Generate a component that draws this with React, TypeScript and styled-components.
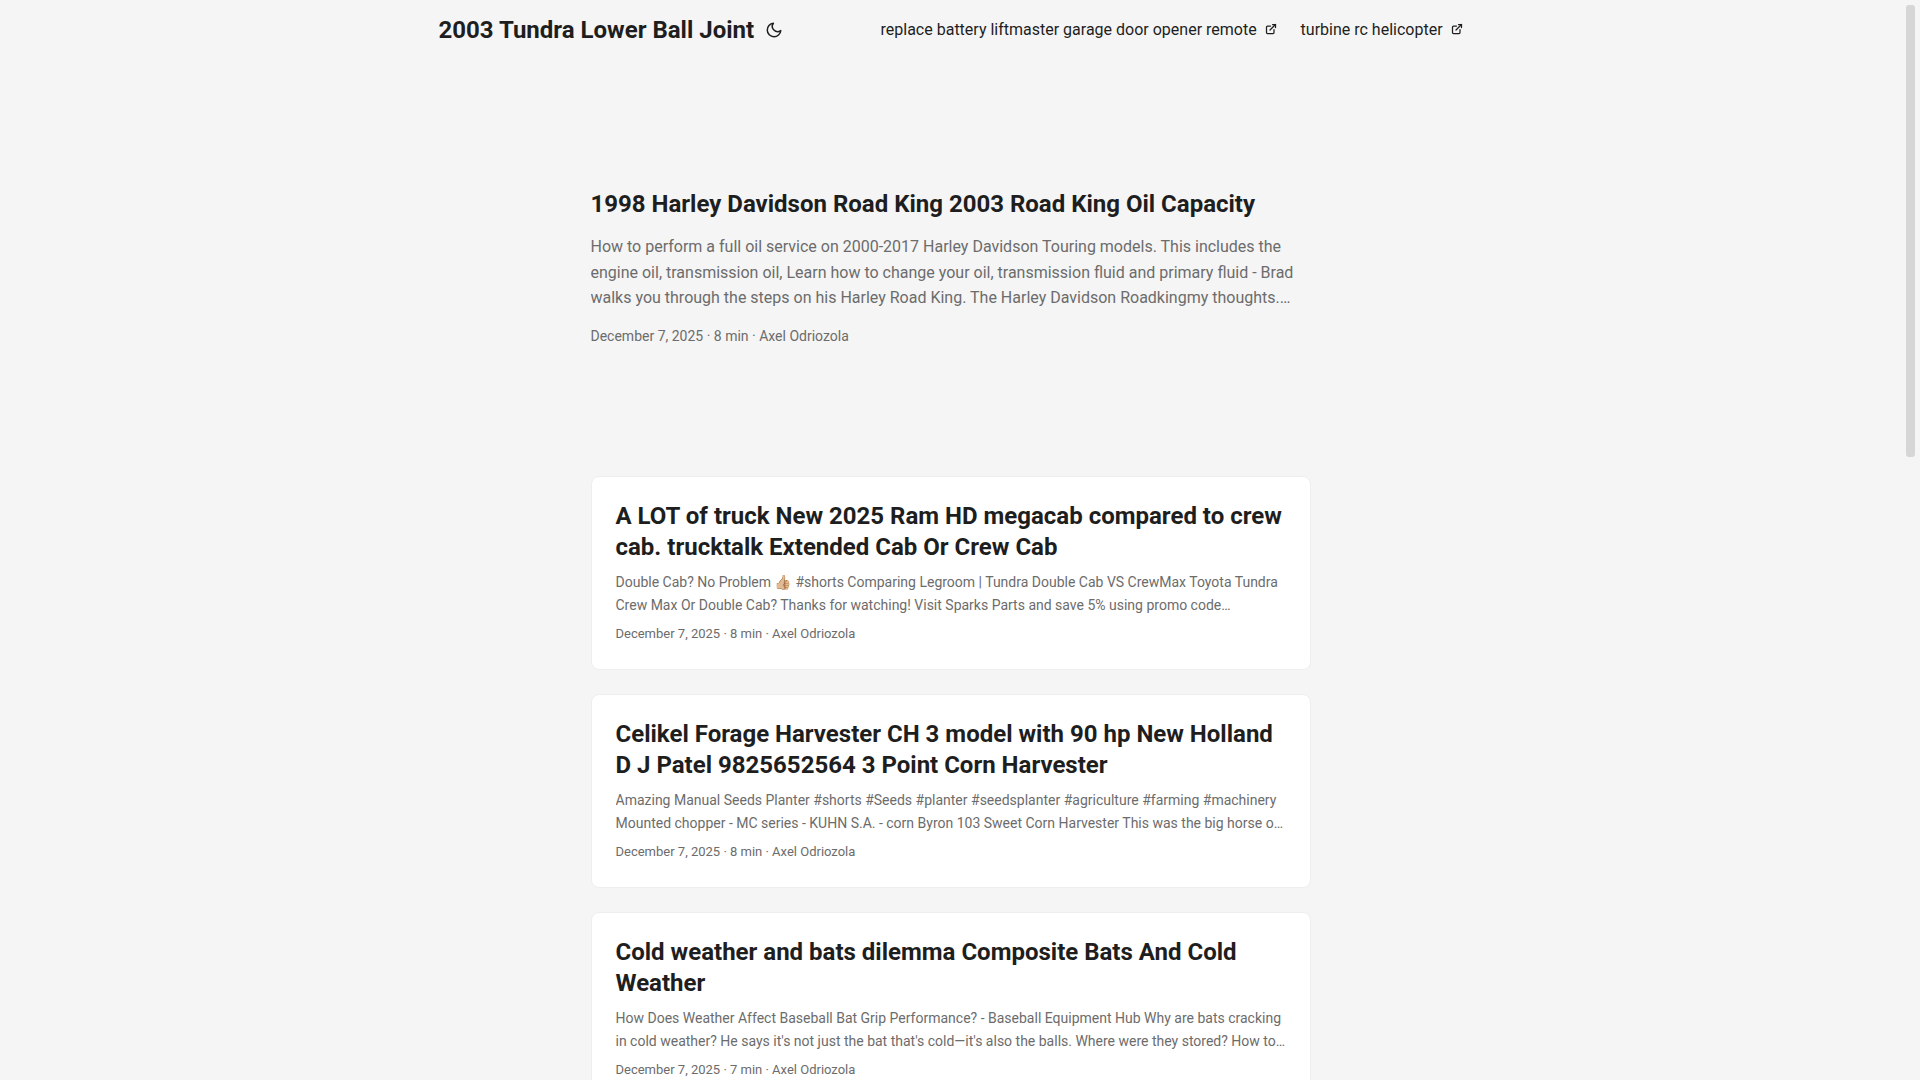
import React, { useCallback, useEffect, useRef, useState } from "react";
import styled, { createGlobalStyle } from "styled-components";

const GlobalStyle = createGlobalStyle`
  *, *::before, *::after { box-sizing: border-box; margin: 0; padding: 0; }
  body {
    font-family: Roboto, "Noto Color Emoji", sans-serif;
    font-size: 16px;
    line-height: 1.6;
    color: #1e1e1e;
    background: #f5f5f5;
    word-break: break-word;
    text-rendering: optimizeLegibility;
  }
  a { color: inherit; text-decoration: none; }
`;

const Page = styled.div`
  display: grid;
  grid-template-columns: minmax(0, 1fr) 19px;
  height: 100vh;
`;

const Scroller = styled.div`
  height: 100vh;
  overflow-y: auto;
  scrollbar-width: none;
`;

const Rail = styled.div`
  padding: 5px;
`;

const Thumb = styled.div`
  border-radius: 3px;
  background: #d6d6d6;
`;

const Nav = styled.nav`
  display: flex;
  flex-wrap: wrap;
  justify-content: space-between;
  max-width: 1072px;
  margin: 0 auto;
  padding: 0 24px;
  line-height: 60px;
`;

const Brand = styled.div`
  display: flex;
  align-items: center;
  gap: 8px;
`;

const SiteName = styled.a`
  font-size: 24px;
  font-weight: 700;
`;

const ThemeToggle = styled.button`
  display: flex;
  padding: 0;
  border: 0;
  background: none;
  color: inherit;
  cursor: pointer;
`;

const Menu = styled.ul`
  display: flex;
  gap: 24px;
  list-style: none;
  white-space: nowrap;
`;

const Main = styled.main`
  max-width: 768px;
  min-height: 228vh;
  margin: 0 auto;
  padding: 24px;
`;

const Featured = styled.article`
  display: flex;
  flex-direction: column;
  justify-content: center;
  min-height: 320px;
  margin: 24px 0 48px;
`;

const Card = styled.article`
  margin-bottom: 24px;
  padding: 24px;
  border: 1px solid #eee;
  border-radius: 8px;
  background: #fff;
`;

const Title = styled.h2`
  font-size: 24px;
  font-weight: 700;
  line-height: 1.3;
`;

const Summary = styled.p<{ $large?: boolean }>`
  display: -webkit-box;
  -webkit-box-orient: vertical;
  -webkit-line-clamp: ${({ $large }) => ($large ? 3 : 2)};
  overflow: hidden;
  margin: ${({ $large }) => ($large ? "14px 0" : "8px 0")};
  color: #6c6c6c;
  font-size: ${({ $large }) => ($large ? "16px" : "14px")};
`;

const Meta = styled.footer<{ $large?: boolean }>`
  color: #6c6c6c;
  font-size: ${({ $large }) => ($large ? "14px" : "13px")};
`;

const Moon = () => (
  <svg width="24" height="18" viewBox="0 0 24 24" fill="none" stroke="currentColor" strokeWidth="2" strokeLinecap="round" strokeLinejoin="round" aria-hidden="true">
    <path d="M21 12.79A9 9 0 1 1 11.21 3 7 7 0 0 0 21 12.79z" />
  </svg>
);

const External = () => (
  <svg width="12" height="12" viewBox="0 0 24 24" fill="none" stroke="currentColor" strokeWidth="2.5" shapeRendering="geometricPrecision" strokeLinecap="round" strokeLinejoin="round" aria-hidden="true">
    <path d="M18 13v6a2 2 0 0 1-2 2H5a2 2 0 0 1-2-2V8a2 2 0 0 1 2-2h6" />
    <path d="M15 3h6v6" />
    <path d="M10 14L21 3" />
  </svg>
);

const links = ["replace battery liftmaster garage door opener remote", "turbine rc helicopter"];

const featured = {
  title: "1998 Harley Davidson Road King 2003 Road King Oil Capacity",
  summary:
    "How to perform a full oil service on 2000-2017 Harley Davidson Touring models. This includes the engine oil, transmission oil, Learn how to change your oil, transmission fluid and primary fluid - Brad walks you through the steps on his Harley Road King. The Harley Davidson Roadkingmy thoughts.…",
  minutes: 8,
};

const posts = [
  {
    title: "A LOT of truck New 2025 Ram HD megacab compared to crew cab. trucktalk Extended Cab Or Crew Cab",
    summary:
      "Double Cab? No Problem 👍🏼 #shorts Comparing Legroom | Tundra Double Cab VS CrewMax Toyota Tundra Crew Max Or Double Cab? Thanks for watching! Visit Sparks Parts and save 5% using promo code…",
    minutes: 8,
  },
  {
    title: "Celikel Forage Harvester CH 3 model with 90 hp New Holland D J Patel 9825652564 3 Point Corn Harvester",
    summary:
      "Amazing Manual Seeds Planter #shorts #Seeds #planter #seedsplanter #agriculture #farming #machinery Mounted chopper - MC series - KUHN S.A. - corn Byron 103 Sweet Corn Harvester This was the big horse o…",
    minutes: 8,
  },
  {
    title: "Cold weather and bats dilemma Composite Bats And Cold Weather",
    summary:
      "How Does Weather Affect Baseball Bat Grip Performance? - Baseball Equipment Hub Why are bats cracking in cold weather? He says it's not just the bat that's cold—it's also the balls. Where were they stored? How to…",
    minutes: 7,
  },
];

const byline = (minutes: number) => `December 7, 2025 · ${minutes} min · Axel Odriozola`;

export default function App() {
  const scroller = useRef<HTMLDivElement>(null);
  const [thumb, setThumb] = useState({ height: 0, top: 0 });

  // Thumb size and travel follow the visible share of the page.
  const measure = useCallback(() => {
    const el = scroller.current;
    if (!el) return;
    const ratio = el.clientHeight / el.scrollHeight;
    setThumb({
      height: Math.round(el.clientHeight * ratio) - 10,
      top: Math.round(el.scrollTop * ratio),
    });
  }, []);

  useEffect(() => {
    measure();
    window.addEventListener("resize", measure);
    return () => window.removeEventListener("resize", measure);
  }, [measure]);

  return (
    <Page>
      <GlobalStyle />
      <Scroller ref={scroller} onScroll={measure}>
        <header>
          <Nav>
            <Brand>
              <SiteName href="#">2003 Tundra Lower Ball Joint</SiteName>
              <ThemeToggle type="button" aria-label="Toggle theme">
                <Moon />
              </ThemeToggle>
            </Brand>
            <Menu>
              {links.map((label) => (
                <li key={label}>
                  <a href="#">
                    {label}&nbsp; <External />
                  </a>
                </li>
              ))}
            </Menu>
          </Nav>
        </header>
        <Main>
          <Featured>
            <Title as="h1">{featured.title}</Title>
            <Summary $large>{featured.summary}</Summary>
            <Meta $large>{byline(featured.minutes)}</Meta>
          </Featured>
          {posts.map((post) => (
            <Card key={post.title}>
              <Title>{post.title}</Title>
              <Summary>{post.summary}</Summary>
              <Meta>{byline(post.minutes)}</Meta>
            </Card>
          ))}
        </Main>
      </Scroller>
      <Rail aria-hidden="true">
        <Thumb style={{ height: thumb.height, marginTop: thumb.top }} />
      </Rail>
    </Page>
  );
}
